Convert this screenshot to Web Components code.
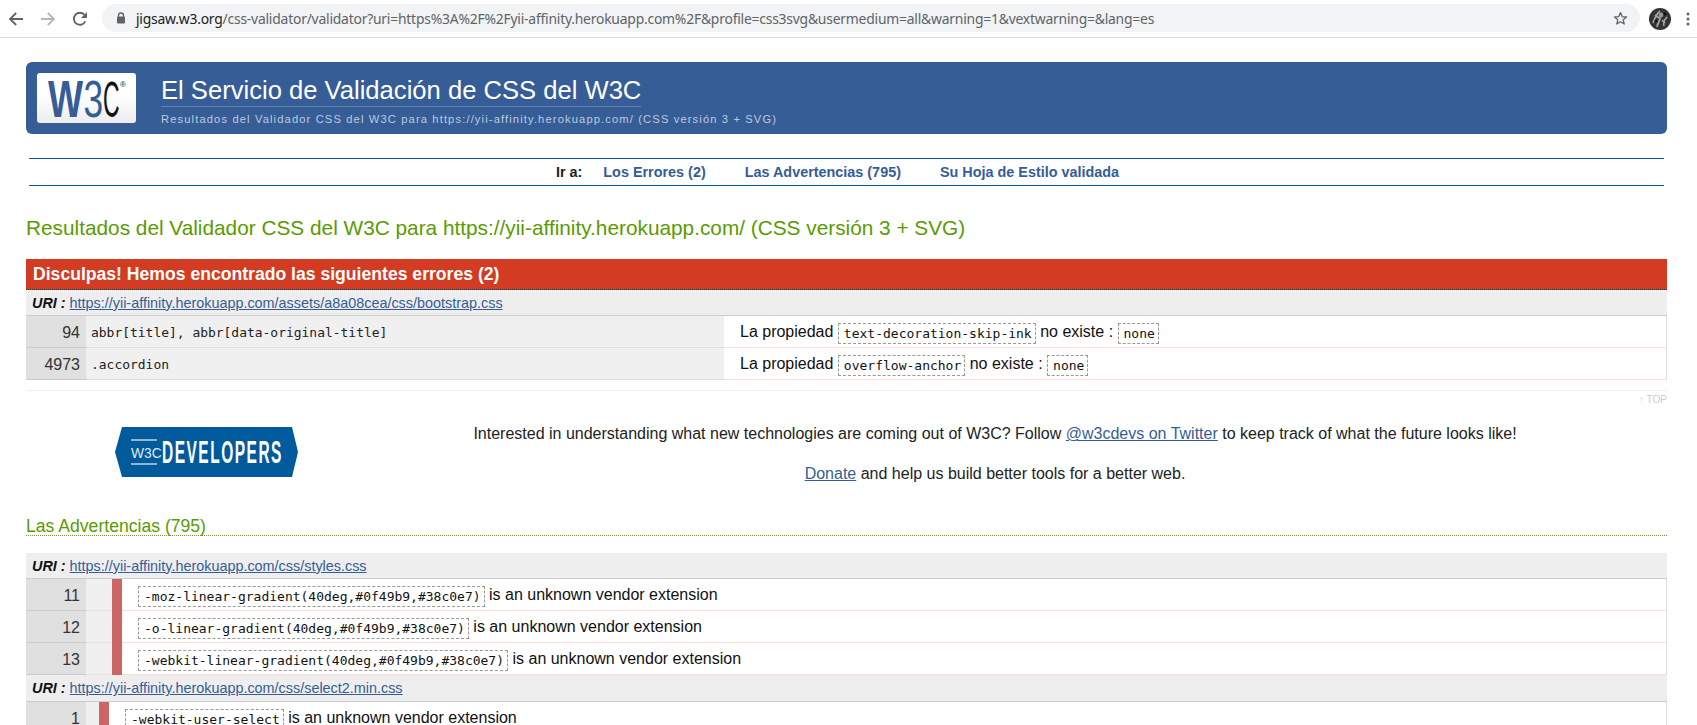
<!DOCTYPE html>
<html lang="es">
<head>
<meta charset="utf-8">
<title>El Servicio de Validación de CSS del W3C</title>
<style>
html,body{margin:0;padding:0;background:#fff;height:725px;overflow:hidden}
body{font-family:"Liberation Sans",Arial,sans-serif;font-size:16px;color:#222}
</style>
</head>
<body>
<browser-bar></browser-bar>
<validator-page>
  <site-header></site-header>
  <jump-nav></jump-nav>
  <results-title>Resultados del Validador CSS del W3C para https://yii-affinity.herokuapp.com/ (CSS versión 3 + SVG)</results-title>
  <error-band>Disculpas! Hemos encontrado las siguientes errores (2)</error-band>
  <issue-group uri="https://yii-affinity.herokuapp.com/assets/a8a08cea/css/bootstrap.css">
    <issue-row data-line="94" kind="error" selector="abbr[title], abbr[data-original-title]">La propiedad <code-tag>text-decoration-skip-ink</code-tag> no existe : <code-tag>none</code-tag></issue-row>
    <issue-row data-line="4973" kind="error" selector=".accordion">La propiedad <code-tag>overflow-anchor</code-tag> no existe : <code-tag>none</code-tag></issue-row>
  </issue-group>
  <top-link></top-link>
  <sponsor-block></sponsor-block>
  <section-title>Las Advertencias (795)</section-title>
  <issue-group uri="https://yii-affinity.herokuapp.com/css/styles.css" gutter="26">
    <issue-row data-line="11" kind="warning"><code-tag>-moz-linear-gradient(40deg,#0f49b9,#38c0e7)</code-tag> is an unknown vendor extension</issue-row>
    <issue-row data-line="12" kind="warning"><code-tag>-o-linear-gradient(40deg,#0f49b9,#38c0e7)</code-tag> is an unknown vendor extension</issue-row>
    <issue-row data-line="13" kind="warning"><code-tag>-webkit-linear-gradient(40deg,#0f49b9,#38c0e7)</code-tag> is an unknown vendor extension</issue-row>
  </issue-group>
  <issue-group uri="https://yii-affinity.herokuapp.com/css/select2.min.css" gutter="13">
    <issue-row data-line="1" kind="warning"><code-tag>-webkit-user-select</code-tag> is an unknown vendor extension</issue-row>
  </issue-group>
</validator-page>

<script>
function define(name, css, html){
  class C extends HTMLElement{
    constructor(){super();this.attachShadow({mode:'open'});}
    connectedCallback(){ if(!this.shadowRoot.firstChild) this.shadowRoot.innerHTML='<style>'+css+'</style>'+(typeof html==='function'?html(this):html); }
  }
  customElements.define(name,C);
}

define('browser-bar',`
:host{display:flex;align-items:center;height:37px;border-bottom:1px solid #dadce0;background:#fff}
svg{display:block;flex:none}
.nav{display:flex;gap:16px;margin-left:8px;margin-right:14px}
.pill{flex:none;width:1538px;height:28px;margin-top:-1px;border-radius:14px;background:#f1f3f4;display:flex;align-items:center;box-sizing:border-box;padding-left:14px}
.url{font:13.9px "Noto Sans","Liberation Sans",sans-serif;color:#5f6368;margin-left:10px;white-space:nowrap;letter-spacing:-.217px}
.url b{font-weight:400;color:#202124}
.star{margin-left:auto;margin-right:12px}
.avatar{margin-left:9px}
.dots{margin-left:15px}
`,`
<div class="nav">
<svg width="16" height="16" viewBox="0 0 16 16"><path d="M15 8H2.500M8.200 2 2 8l6.200 6" fill="none" stroke="#5f6368" stroke-width="1.800"/></svg>
<svg width="16" height="16" viewBox="0 0 16 16"><path d="M1 8h12.500M7.800 2 14 8l-6.200 6" fill="none" stroke="#b4b7ba" stroke-width="1.800"/></svg>
<svg width="16" height="16" viewBox="0 0 16 16"><path d="M13.300 10.300A6 6 0 1 1 12.400 3.800" fill="none" stroke="#5f6368" stroke-width="1.800"/><path d="M15 1v6H9z" fill="#5f6368"/></svg>
</div>
<div class="pill">
<svg width="10" height="12" viewBox="0 0 10 12"><path d="M2.500 5V3.500a2.500 2.500 0 0 1 5 0V5" fill="none" stroke="#5f6368" stroke-width="1.300"/><rect x="1" y="4.600" width="8" height="7" rx="1" fill="#5f6368"/></svg>
<span class="url"><b>jigsaw.w3.org</b>/css-validator/validator?uri=https%3A%2F%2Fyii-affinity.herokuapp.com%2F&amp;profile=css3svg&amp;usermedium=all&amp;warning=1&amp;vextwarning=&amp;lang=es</span>
<svg class="star" width="15" height="15" viewBox="0 0 15 15"><path d="M7.500 1.600 9.200 5.600l4.300.4-3.300 2.800 1 4.200-3.700-2.200-3.700 2.200 1-4.200L1.500 6l4.300-.4z" fill="none" stroke="#5f6368" stroke-width="1.300" stroke-linejoin="round"/></svg>
</div>
<svg class="avatar" width="22" height="22" viewBox="0 0 22 22"><circle cx="11" cy="11" r="11" fill="#333"/><path d="M4 15c2-5 3-9 7-12M8 19c1-4 3-7 4-12M15 18c-1-3 1-7 3-9M6 7l4 3M13 12l3 3M10 14l-2 3" stroke="#a8a8a8" stroke-width="1.600" fill="none"/><circle cx="12" cy="7" r="2.400" fill="#999"/><circle cx="7" cy="13" r="1.500" fill="#111"/><circle cx="16" cy="6" r="1.500" fill="#111"/></svg>
<svg class="dots" width="4" height="14" viewBox="0 0 4 14"><circle cx="2" cy="2" r="1.500" fill="#5f6368"/><circle cx="2" cy="7" r="1.500" fill="#5f6368"/><circle cx="2" cy="12" r="1.500" fill="#5f6368"/></svg>
`);

define('validator-page',`:host{display:block;padding:0 30px 0 26px}`,`<slot></slot>`);

define('site-header',`
:host{display:flex;align-items:flex-start;height:72px;margin-top:24px;background:#365d95;border-radius:6px;color:#fff;padding:11px 0 0 11px;box-sizing:border-box}
.logo{flex:none;width:99px;height:50px;border-radius:3px;background:linear-gradient(#fff 45%,#ececec);display:block;overflow:visible}
.txt{margin-left:25px;display:flex;flex-direction:column;align-items:flex-start}
h1{margin:0;font:400 25.6px/29px "Liberation Sans",sans-serif;border-bottom:1px solid #5f82b3;padding:3px 0 1px;white-space:nowrap}
p{margin:5px 0 0;font:11.2px/14px "Liberation Sans",sans-serif;letter-spacing:1.12px;color:#bccbe0;white-space:nowrap}
`,`
<svg class="logo" viewBox="0 0 99 50">
<text transform="translate(11 44) scale(.714 1)" font-family="Liberation Sans" font-size="52" font-weight="700" fill="#365d95">W</text>
<text transform="translate(46.500 44) scale(.68 1)" font-family="Liberation Sans" font-size="52" fill="#365d95">3</text>
<text transform="translate(66 44) scale(.46 1)" font-family="Liberation Sans" font-size="50" fill="#111">C</text>
<text x="83" y="14" font-family="Liberation Sans" font-size="8" fill="#222">®</text>
</svg>
<div class="txt"><h1>El Servicio de Validación de CSS del W3C</h1><p>Resultados del Validador CSS del W3C para https://yii-affinity.herokuapp.com/ (CSS versión 3 + SVG)</p></div>
`);

define('jump-nav',`
:host{display:flex;justify-content:center;align-items:center;height:26px;margin:24px 3px 0;border-top:1px solid #005a9c;border-bottom:1px solid #005a9c;font:700 14.4px "Liberation Sans",sans-serif;color:#222;padding-right:18px}
span{margin-right:21px}
a{color:#365d95;text-decoration:none;margin-right:39px}
a:last-child{margin-right:0}
`,`<span>Ir a:</span><a href="#">Los Errores (2)</a><a href="#">Las Advertencias (795)</a><a href="#">Su Hoja de Estilo validada</a>`);

define('results-title',`:host{display:block;margin-top:30px;font:400 20.8px/24px "Liberation Sans",sans-serif;color:#5a9b00}`,`<slot></slot>`);

define('error-band',`:host{display:block;margin-top:19px;height:30px;padding-left:7px;background:#d33c22;color:#fff;font:700 17.6px/30px "Liberation Sans",sans-serif;border-bottom:1px dotted #333}`,`<slot></slot>`);

define('issue-group',`
:host{display:block}
.uri{display:flex;align-items:center;gap:4px;height:25.400px;padding-left:6px;background:#eee;border-bottom:1px solid #ccc;font-size:14.4px;color:#111}
.uri b{font-style:italic}
a{color:#365d95}
`,el=>`<div class="uri"><b>URI :</b> <a href="#">${el.getAttribute('uri')}</a></div><slot></slot>`);

define('issue-row',`
:host{display:flex;height:32px;box-sizing:border-box}
.n{flex:none;width:60px;box-sizing:border-box;background:#e0e0e0;border-bottom:1px solid #ccc;text-align:right;padding:1px 6px 0 0;line-height:31px;font-size:16px;color:#333}
.sel{flex:none;box-sizing:border-box;width:638px;background:#f0f0f0;border-bottom:1px solid #ddd;padding:1px 0 0 5px;font:12.96px/31px "DejaVu Sans Mono",monospace;color:#222;white-space:pre}
.gut{flex:none;background:#f0f0f0;border-bottom:1px solid #e4e4e4}
.bar{flex:none;width:10px;background:#cc6666}
.msg{flex:1;min-width:0;box-sizing:border-box;border-bottom:1px solid #fdd;border-right:1px solid #ddd;padding-left:16px;line-height:31px;background:#fff;font-size:16px;color:#111;white-space:nowrap}
`,el=>{
  const k=el.getAttribute('kind');
  const n=`<div class="n">${el.getAttribute('data-line')}</div>`;
  if(k==='error') return n+`<div class="sel">${el.getAttribute('selector')}</div><div class="msg"><slot></slot></div>`;
  const g=el.parentElement.getAttribute('gutter')||'26';
  return n+`<div class="gut" style="width:${g}px"></div><div class="bar"></div><div class="msg"><slot></slot></div>`;
});

define('code-tag',`:host{display:inline-block;border:1px dashed #999;padding:0 3px 0 5px;font:13px/19px "DejaVu Sans Mono",monospace;color:#111;vertical-align:-1px}`,`<slot></slot>`);

define('top-link',`:host{display:block;margin-top:10px;border-top:1px solid #eef;padding-top:3px;text-align:right;font:10px/12px "Liberation Sans",sans-serif;color:#c8ccd0}`,`↑ TOP`);

define('sponsor-block',`
:host{display:grid;grid-template-columns:297px 1fr;height:89.600px;margin-top:21px}
svg{display:block;margin-left:89px}
.t{text-align:center;font-size:16px;color:#222}
p{margin:-3px 0 21px;line-height:19px}
p+p{margin-top:0}
a{color:#365d95}
`,`
<svg width="183" height="50" viewBox="0 0 183 50">
<polygon points="7,0 177,0 183,25 177,50 7,50 0,25" fill="#005a9c"/>
<rect x="16" y="12" width="26" height="2" fill="#8fb4d6"/><rect x="16" y="36" width="26" height="2" fill="#8fb4d6"/>
<text transform="translate(16 31) scale(.92 1)" font-family="Liberation Sans" font-size="15" fill="#dfe9f3">W3C</text>
<text transform="translate(47 36) scale(.5 1)" font-family="Liberation Sans" font-weight="700" font-size="31" letter-spacing="3" fill="#fff">DEVELOPERS</text>
</svg>
<div class="t"><p>Interested in understanding what new technologies are coming out of W3C? Follow <a href="#">@w3cdevs on Twitter</a> to keep track of what the future looks like!</p><p><a href="#">Donate</a> and help us build better tools for a better web.</p></div>
`);

define('section-title',`:host{display:block;font:400 17.6px/18px "Liberation Sans",sans-serif;color:#5a9b00;border-bottom:1px dotted #7f8f3a;margin-bottom:17px}`,`<slot></slot>`);
</script>
</body>
</html>
